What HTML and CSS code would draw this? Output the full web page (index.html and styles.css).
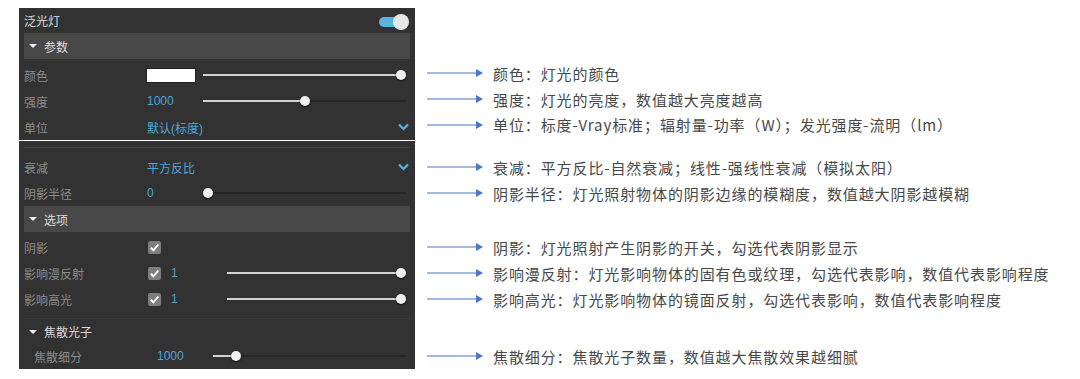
FILE: index.html
```html
<!DOCTYPE html>
<html lang="zh-CN">
<head>
  <meta charset="UTF-8">
  <title>泛光灯</title>
  <link rel="stylesheet" href="styles.css">
</head>
<body>
  <div class="sheet">

    <!-- titulo + toggle -->
    <div class="line">
      <div class="cell title-bar">
        <span class="title">泛光灯</span>
        <span class="toggle"></span>
      </div>
    </div>

    <div class="line"><div class="cell"><div class="group-head"><i class="tri"></i>参数</div></div></div>
    <div class="line"><div class="cell gap-3"></div></div>

    <div class="line">
      <div class="cell row">
        <span class="label">颜色</span>
        <span class="swatch"></span>
        <div class="slider" style="--v:1"><div class="track"><div class="fill"></div></div><span class="thumb"></span></div>
      </div>
      <div class="note up"><svg class="arrow" width="56" height="10" viewBox="0 0 56 10"><line x1="0" y1="5" x2="50" y2="5"/><polygon points="49,1 56,5 49,9"/></svg>颜色：灯光的颜色</div>
    </div>

    <div class="line">
      <div class="cell row">
        <span class="label">强度</span>
        <span class="value">1000</span>
        <div class="slider" style="--v:.5"><div class="track"><div class="fill"></div></div><span class="thumb"></span></div>
      </div>
      <div class="note up"><svg class="arrow" width="56" height="10" viewBox="0 0 56 10"><line x1="0" y1="5" x2="50" y2="5"/><polygon points="49,1 56,5 49,9"/></svg>强度：灯光的亮度，数值越大亮度越高</div>
    </div>

    <div class="line">
      <div class="cell row">
        <span class="label">单位</span>
        <span class="value grow">默认(标度)</span>
        <svg class="chev" width="11" height="8" viewBox="0 0 11 8"><polyline points="1,1.5 5.5,6 10,1.5"/></svg>
      </div>
      <div class="note up2"><svg class="arrow" width="56" height="10" viewBox="0 0 56 10"><line x1="0" y1="5" x2="50" y2="5"/><polygon points="49,1 56,5 49,9"/></svg>单位：标度-Vray标准；辐射量-功率（W）；发光强度-流明（lm）</div>
    </div>

    <div class="line"><div class="cell sep"><hr></div></div>

    <div class="line">
      <div class="cell row">
        <span class="label">衰减</span>
        <span class="value grow">平方反比</span>
        <svg class="chev" width="11" height="8" viewBox="0 0 11 8"><polyline points="1,1.5 5.5,6 10,1.5"/></svg>
      </div>
      <div class="note"><svg class="arrow" width="56" height="10" viewBox="0 0 56 10"><line x1="0" y1="5" x2="50" y2="5"/><polygon points="49,1 56,5 49,9"/></svg>衰减：平方反比-自然衰减；线性-强线性衰减（模拟太阳）</div>
    </div>

    <div class="line">
      <div class="cell row">
        <span class="label">阴影半径</span>
        <span class="value">0</span>
        <div class="slider" style="--v:0"><div class="track"><div class="fill"></div></div><span class="thumb"></span></div>
      </div>
      <div class="note"><svg class="arrow" width="56" height="10" viewBox="0 0 56 10"><line x1="0" y1="5" x2="50" y2="5"/><polygon points="49,1 56,5 49,9"/></svg>阴影半径：灯光照射物体的阴影边缘的模糊度，数值越大阴影越模糊</div>
    </div>

    <div class="line"><div class="cell"><div class="group-head"><i class="tri"></i>选项</div></div></div>
    <div class="line"><div class="cell gap-2"></div></div>

    <div class="line">
      <div class="cell row">
        <span class="label">阴影</span>
        <span class="value"><span class="check"><svg width="13" height="13" viewBox="0 0 13 13"><polyline points="2.8,6.8 5.4,9.3 10.3,3.5"/></svg></span></span>
      </div>
      <div class="note"><svg class="arrow" width="56" height="10" viewBox="0 0 56 10"><line x1="0" y1="5" x2="50" y2="5"/><polygon points="49,1 56,5 49,9"/></svg>阴影：灯光照射产生阴影的开关，勾选代表阴影显示</div>
    </div>

    <div class="line">
      <div class="cell row">
        <span class="label">影响漫反射</span>
        <span class="value wide"><span class="check"><svg width="13" height="13" viewBox="0 0 13 13"><polyline points="2.8,6.8 5.4,9.3 10.3,3.5"/></svg></span>1</span>
        <div class="slider" style="--v:1"><div class="track"><div class="fill"></div></div><span class="thumb"></span></div>
      </div>
      <div class="note"><svg class="arrow" width="56" height="10" viewBox="0 0 56 10"><line x1="0" y1="5" x2="50" y2="5"/><polygon points="49,1 56,5 49,9"/></svg>影响漫反射：灯光影响物体的固有色或纹理，勾选代表影响，数值代表影响程度</div>
    </div>

    <div class="line">
      <div class="cell row">
        <span class="label">影响高光</span>
        <span class="value wide"><span class="check"><svg width="13" height="13" viewBox="0 0 13 13"><polyline points="2.8,6.8 5.4,9.3 10.3,3.5"/></svg></span>1</span>
        <div class="slider" style="--v:1"><div class="track"><div class="fill"></div></div><span class="thumb"></span></div>
      </div>
      <div class="note"><svg class="arrow" width="56" height="10" viewBox="0 0 56 10"><line x1="0" y1="5" x2="50" y2="5"/><polygon points="49,1 56,5 49,9"/></svg>影响高光：灯光影响物体的镜面反射，勾选代表影响，数值代表影响程度</div>
    </div>

    <div class="line"><div class="cell sep sep-faint"><hr></div></div>

    <div class="line"><div class="cell"><div class="group-head plain"><i class="tri"></i>焦散光子</div></div></div>

    <div class="line">
      <div class="cell row indent">
        <span class="label">焦散细分</span>
        <span class="value">1000</span>
        <div class="slider" style="--v:.1"><div class="track"><div class="fill"></div></div><span class="thumb"></span></div>
      </div>
      <div class="note"><svg class="arrow" width="56" height="10" viewBox="0 0 56 10"><line x1="0" y1="5" x2="50" y2="5"/><polygon points="49,1 56,5 49,9"/></svg>焦散细分：焦散光子数量，数值越大焦散效果越细腻</div>
    </div>

  </div>
</body>
</html>
```

FILE: styles.css
```css
:root {
  --panel-bg: #323232;
  --head-bg: #484848;
  --label: #8c8c8c;
  --blue: #4ea5da;
  --arrow: #4a76c6;
}
html, body { margin: 0; background: #fff; }
body { font-family: "Noto Sans CJK SC", sans-serif; }

.sheet { display: flex; flex-direction: column; padding: 8px 0 0 19px; }
.line { display: flex; }
.cell {
  width: 396px; flex: none; box-sizing: border-box;
  padding: 0 5px; background: var(--panel-bg);
}

/* titulo */
.title-bar { height: 25px; display: flex; align-items: center; justify-content: space-between; }
.title { font-size: 12px; color: #dedede; }
.toggle { position: relative; width: 30px; height: 16px; margin-right: 1px; margin-top: 2px; }
.toggle::before {
  content: ""; position: absolute; left: 0; top: 3px;
  width: 24px; height: 10px; border-radius: 5px; background: #5ab4de;
}
.toggle::after {
  content: ""; position: absolute; right: 0; top: 0;
  width: 16px; height: 16px; border-radius: 50%; background: #e6e6e6;
}

/* cabecalho de grupo */
.group-head {
  height: 26px; display: flex; align-items: center; gap: 7px;
  padding-left: 5px; background: var(--head-bg);
  font-size: 12px; color: #dcdcdc;
}
.group-head.plain { background: none; height: 23px; margin-top: 1px; }
.tri {
  width: 0; height: 0;
  border-left: 4px solid transparent; border-right: 4px solid transparent;
  border-top: 4.5px solid #eee;
}
.gap-3 { height: 3px; }
.gap-2 { height: 2px; }

/* separadores */
.sep { height: 13px; display: flex; flex-direction: column; justify-content: center; }
.sep hr { margin: 0; border: none; height: 1px; background: #444; }
.sep-faint { height: 7px; justify-content: flex-end; }
.sep-faint hr { background: #3a3a3a; }

/* linhas */
.row { height: 26px; display: flex; align-items: center; font-size: 12px; }
.row.indent { padding-left: 15px; }
.label { width: 123px; flex: none; color: var(--label); }
.value {
  width: 56px; flex: none; color: var(--blue);
  font-family: "Liberation Sans", "Noto Sans CJK SC", sans-serif; font-size: 12px;
}
.value.grow { flex: 1; width: auto; }
.value.wide { width: 80px; display: flex; align-items: center; gap: 10px; }
.swatch {
  width: 48px; height: 13px; flex: none; margin-right: 8px;
  background: #fff; box-shadow: 0 0 0 1px #222;
}
.chev { margin-right: 1px; }
.chev polyline { fill: none; stroke: #5cb6e8; stroke-width: 2.2; }

.check {
  width: 13px; height: 13px; margin-left: 1px; border-radius: 2px;
  background: #7e7e7e; display: flex;
}
.check polyline { fill: none; stroke: #fff; stroke-width: 1.9; }

/* slider */
.slider { position: relative; flex: 1; height: 10px; margin-right: 4px; }
.track { margin-top: 4px; height: 2px; background: #262626; }
.fill { height: 2px; background: #d2d2d2; width: calc((100% - 10px) * var(--v) + 5px); }
.thumb {
  position: absolute; top: 0; left: calc((100% - 10px) * var(--v));
  width: 10px; height: 10px; border-radius: 50%;
  background: #efefef; box-shadow: 0 1px 2px rgba(0,0,0,.7);
}

/* anotacoes */
.note {
  display: flex; align-items: center; gap: 10px; margin-left: 12px;
  font-size: 15px; letter-spacing: .9px; color: #484848; white-space: nowrap;
}
.note.up { padding-bottom: 4px; }
.note.up2 { padding-bottom: 6px; }
.arrow line { stroke: var(--arrow); stroke-width: 1.2; }
.arrow polygon { fill: var(--arrow); }
```
